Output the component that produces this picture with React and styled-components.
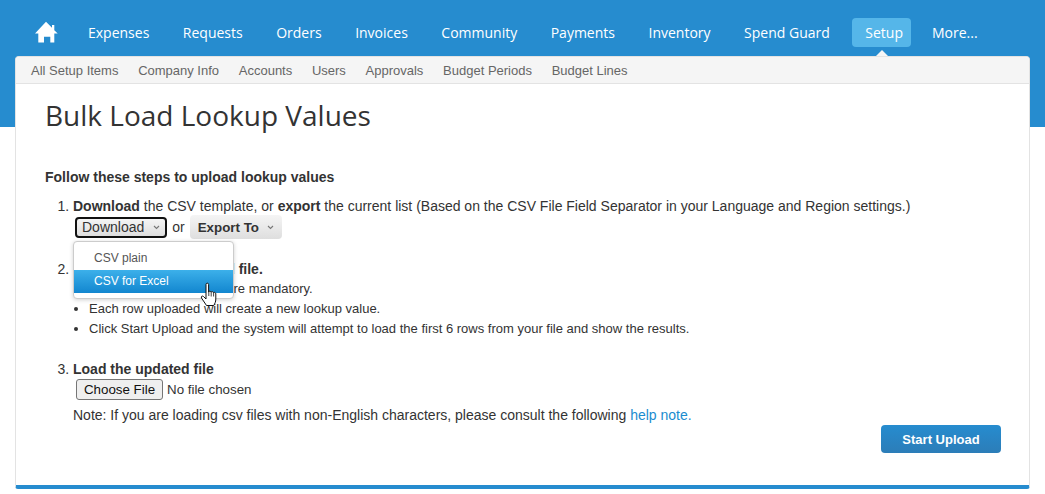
import React from "react";
import styled, { createGlobalStyle } from "styled-components";

const GlobalStyle = createGlobalStyle`
  html, body {
    margin: 0;
    padding: 0;
  }
  body {
    font-family: "Liberation Sans", Arial, sans-serif;
    color: #333;
    overflow: hidden;
  }
`;

const Page = styled.div`
  width: 1045px;
  height: 494px;
  box-sizing: border-box;
  padding: 18px 15px 0;
  background: linear-gradient(#268ccf 127px, #fff 127px);
`;

const TopNav = styled.nav`
  display: flex;
  align-items: center;
  height: 29px;
  padding-left: 20px;
  margin-bottom: 9px;
`;

const HomeLink = styled.a`
  display: flex;
  width: 23px;
  height: 23px;
  margin-right: 17px;
`;

const NavItem = styled.a`
  font-family: "Open Sans", sans-serif;
  font-size: 14px;
  line-height: 29px;
  color: #fff;
  padding: 0 ${p => (p.$active ? "8px" : "13px")} 0 13px;
  margin-left: ${p => (p.$active ? 2 : 0)}px;
  margin-right: ${p => (p.$tight ? 7.5 : 8)}px;
  border-radius: 4px;
  position: relative;
  background: ${p => (p.$active ? "#55b6e9" : "transparent")};

  ${p =>
    p.$active &&
    `
    &::after {
      content: "";
      position: absolute;
      left: 50%;
      bottom: -9px;
      margin-left: -6px;
      border: 6px solid transparent;
      border-top: 0;
      border-bottom-color: #f5f5f5;
    }
  `}
`;

const Card = styled.div`
  height: 433px;
  box-sizing: border-box;
  background: #fff;
  border: 1px solid #e3e3e3;
  border-bottom: 4px solid #268ccf;
  border-radius: 4px 4px 3px 3px;
  display: flex;
  flex-direction: column;
`;

const SubNav = styled.div`
  display: flex;
  gap: 19.7px;
  height: 27px;
  box-sizing: border-box;
  align-items: center;
  padding-left: 15px;
  background: #f5f5f5;
  border-bottom: 1px solid #e3e3e3;
  border-radius: 4px 4px 0 0;
  flex-shrink: 0;
`;

const SubNavItem = styled.a`
  font-size: 13px;
  color: #666;
`;

const Content = styled.div`
  padding: 0 28px 0 29px;
  font-size: 14px;
  line-height: 17px;
`;

const Title = styled.h1`
  font-family: "Open Sans", sans-serif;
  font-size: 28px;
  font-weight: 400;
  line-height: 36px;
  color: #333;
  margin: 13px 0 36px;
`;

const Intro = styled.div`
  font-weight: 700;
  margin-bottom: 12px;
`;

const Steps = styled.ol`
  margin: 0;
  padding: 0 0 0 28px;
`;

const Step = styled.li`
  margin-bottom: ${p => p.$gap || 0}px;
  position: relative;
`;

const DropButton = styled.button`
  font-family: inherit;
  font-size: ${p => (p.$bold ? "13.33px" : "14px")};
  height: ${p => (p.$focused ? 21 : 24)}px;
  box-sizing: border-box;
  padding: 0 ${p => (p.$focused ? 5 : 8)}px;
  color: #333;
  border-radius: 4px;
  background: linear-gradient(#f5f5f5, #dedede);
  border: ${p => (p.$focused ? "2px solid #111" : "0")};
  font-weight: ${p => (p.$bold ? 700 : 400)};
  display: inline-flex;
  align-items: center;
  gap: ${p => (p.$focused ? 9 : 8)}px;
`;

const ButtonRow = styled.div`
  display: flex;
  align-items: center;
  gap: 5px;
  margin: 0 0 0 2px;
`;

const Menu = styled.div`
  position: absolute;
  left: 0;
  top: 43px;
  width: 161px;
  box-sizing: border-box;
  padding: 5px 0;
  background: #fff;
  border: 1px solid #ccc;
  border-radius: 4px;
  box-shadow: 0 1px 4px rgba(0, 0, 0, 0.18);
  z-index: 2;
`;

const MenuItem = styled.div`
  height: 23px;
  line-height: 23px;
  padding-left: 20px;
  font-size: 12px;
  color: ${p => (p.$active ? "#fff" : "#555")};
  background: ${p => (p.$active ? "linear-gradient(#3cb0ea, #1286cf)" : "transparent")};
`;

const Cursor = styled.svg`
  position: absolute;
  left: 127px;
  top: 84px;
  z-index: 3;
`;

const StepTitle = styled.div`
  font-weight: 700;
`;

const Bullets = styled.ul`
  margin: 1px 0 0;
  padding: 0 0 0 16px;
  font-size: 13px;
  line-height: 20px;
  list-style: disc;
`;

const FileRow = styled.div`
  display: flex;
  align-items: center;
  gap: 4px;
  margin: 1px 0 7px 3px;
  font-size: 13.33px;
`;

const FileButton = styled.button`
  font-family: inherit;
  font-size: 13.33px;
  height: 21px;
  width: 87px;
  padding: 0;
  color: #111;
  background: #efefef;
  border: 1px solid #767676;
  border-radius: 3px;
`;

const HelpLink = styled.a`
  color: #1a8ccf;
`;

const Actions = styled.div`
  display: flex;
  justify-content: flex-end;
  margin-top: 1px;
`;

const UploadButton = styled.button`
  font-family: inherit;
  font-size: 13px;
  font-weight: 700;
  width: 120px;
  height: 28px;
  color: #fff;
  border: 0;
  border-radius: 4px;
  background: linear-gradient(#268ccf, #2c7db8);
`;

const Chevron = () => (
  <svg width="7" height="5" viewBox="0 0 7 5">
    <path d="M1 1l2.500 2.500L6 1" fill="none" stroke="#777" strokeWidth="1.100" />
  </svg>
);

const navItems = ["Expenses", "Requests", "Orders", "Invoices", "Community", "Payments", "Inventory", "Spend Guard"];
const subItems = ["All Setup Items", "Company Info", "Accounts", "Users", "Approvals", "Budget Periods", "Budget Lines"];

export default function App() {
  return (
    <Page>
      <GlobalStyle />
      <TopNav>
        <HomeLink>
          <svg width="23" height="23" viewBox="0 0 23 23">
            <path
              d="M11 .7L0 12.500h3.300v9h5.700v-5.800h6.300v5.800h4v-9h3.400l-3.400-3.300V4h-2.300v2.700z"
              fill="#fff"
            />
          </svg>
        </HomeLink>
        {navItems.map(item => (
          <NavItem key={item} $tight>{item}</NavItem>
        ))}
        <NavItem $active>Setup</NavItem>
        <NavItem>More...</NavItem>
      </TopNav>
      <Card>
        <SubNav>
          {subItems.map(item => (
            <SubNavItem key={item}>{item}</SubNavItem>
          ))}
        </SubNav>
        <Content>
          <Title>Bulk Load Lookup Values</Title>
          <Intro>Follow these steps to upload lookup values</Intro>
          <Steps>
            <Step $gap={22}>
              <b>Download</b> the CSV template, or <b>export</b> the current list (Based on the CSV File Field Separator in your Language and Region settings.)
              <ButtonRow>
                <DropButton $focused>
                  Download <Chevron />
                </DropButton>
                or
                <DropButton $bold>
                  Export To <Chevron />
                </DropButton>
              </ButtonRow>
              <Menu>
                <MenuItem>CSV plain</MenuItem>
                <MenuItem $active>CSV for Excel</MenuItem>
              </Menu>
              <Cursor width="20" height="26" viewBox="0 0 20 26">
                <path
                  d="M6 2.500c0-1.800 2.600-1.800 2.600 0V10c0-1 2.400-1.200 2.500.3 0-1 2.300-1 2.400.5 .3-.8 2.200-.6 2.300 1V17c0 3-1 4.500-2 6.500H6.500L1.500 16c-.8-1.500.8-2.600 2-1.500L6 17z"
                  fill="#fff"
                  stroke="#111"
                  strokeWidth="1"
                />
                <path d="M8.800 10v4M11.200 10.500v4M13.600 11v3.500" fill="none" stroke="#111" strokeWidth="0.800" />
              </Cursor>
            </Step>
            <Step $gap={22}>
              <StepTitle>Update this downloaded file.</StepTitle>
              <Bullets>
                <li>Columns marked with * are mandatory.</li>
                <li>Each row uploaded will create a new lookup value.</li>
                <li>Click Start Upload and the system will attempt to load the first 6 rows from your file and show the results.</li>
              </Bullets>
            </Step>
            <Step>
              <StepTitle>Load the updated file</StepTitle>
              <FileRow>
                <FileButton>Choose File</FileButton>
                No file chosen
              </FileRow>
              Note: If you are loading csv files with non-English characters, please consult the following <HelpLink>help note.</HelpLink>
            </Step>
          </Steps>
          <Actions>
            <UploadButton>Start Upload</UploadButton>
          </Actions>
        </Content>
      </Card>
    </Page>
  );
}
